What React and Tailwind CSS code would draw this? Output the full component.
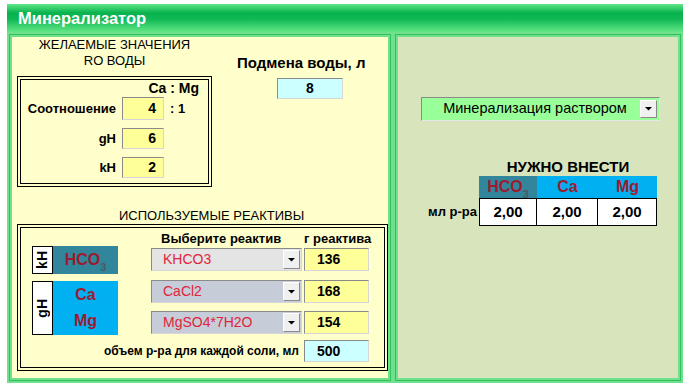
import React from "react";

const font = "font-['Liberation_Sans',Arial,sans-serif]";
const darkRed = "text-[#9c1b30]";

function Field({ value, bg = "bg-[#ffff99]", className = "", align = "justify-end pr-[7px]" }) {
  return (
    <div
      className={`flex items-center ${align} ${bg} border border-t-[#8a8a8a] border-l-[#8a8a8a] border-r-[#d6d6d6] border-b-[#d6d6d6] text-[14px] font-bold text-black ${className}`}
    >
      {value}
    </div>
  );
}

function Arrow() {
  return (
    <div className="flex h-full w-[17px] items-center justify-center border border-t-white border-l-white border-r-[#8a8a8a] border-b-[#8a8a8a] bg-[#f0f0f0]">
      <svg width="7" height="4" viewBox="0 0 7 4">
        <polygon points="0,0 7,0 3.5,3.5" fill="#000" />
      </svg>
    </div>
  );
}

function Select({ label, bg }) {
  return (
    <div
      className={`flex h-[23px] w-[151px] items-center border border-t-[#8a8a8a] border-l-[#8a8a8a] border-r-[#d6d6d6] border-b-[#d6d6d6] ${bg} pr-[1px] py-[1px]`}
    >
      <span className="flex-1 pl-[11px] text-[14px] text-[#e0243c]">{label}</span>
      <Arrow />
    </div>
  );
}

function Hco3({ className = "" }) {
  return (
    <span className={`font-bold text-[16px] ${darkRed} ${className}`}>
      HCO<sub className="text-[11px] text-[#4a5a60] align-[-3px]">3</sub>
    </span>
  );
}

const panelBorder =
  "border-2 border-[#6fe08c] shadow-[inset_0_0_0_1px_#34bf5c,inset_0_0_0_3px_#6fe08c] p-[3px]";

export default function App() {
  return (
    <div className={`h-[390px] w-[690px] bg-white pt-[4px] pl-[7px] ${font}`}>
      <div className="w-[676px]">
        <div className="flex h-[28px] items-center bg-[linear-gradient(180deg,#62e687_0%,#07b24d_32%,#12b955_55%,#62e686_100%)] pl-[11px]">
          <span className="text-[16.5px] font-bold text-white">Минерализатор</span>
        </div>

        <div className="flex h-[351px]">
          {/* left panel */}
          <div className={`w-[386px] bg-[#ffffcc] ${panelBorder}`}>
            <div className="flex">
              <div className="ml-[5px] w-[195px]">
                <div className="text-center text-[13px] leading-4 text-black">
                  ЖЕЛАЕМЫЕ ЗНАЧЕНИЯ
                  <br />
                  RO ВОДЫ
                </div>
                <div className="mt-[7px] h-[111px] border-4 border-double border-black">
                  <div className="flex h-[16px] items-center justify-end pr-[9px] text-[14px] font-bold">
                    Ca : Mg
                  </div>
                  <div className="mt-[1px] flex h-[23px] items-center">
                    <span className="w-[95px] text-right text-[13px] font-bold">Соотношение</span>
                    <Field value="4" className="ml-[6px] h-full w-[42px]" />
                    <span className="ml-[6px] text-[13px] font-bold">: 1</span>
                  </div>
                  <div className="mt-[8px] flex h-[21px] items-center">
                    <span className="w-[95px] text-right text-[13px] font-bold">gH</span>
                    <Field value="6" className="ml-[6px] h-full w-[42px]" />
                  </div>
                  <div className="mt-[8px] flex h-[21px] items-center">
                    <span className="w-[95px] text-right text-[13px] font-bold">kH</span>
                    <Field value="2" className="ml-[6px] h-full w-[42px]" />
                  </div>
                </div>
              </div>
              <div className="ml-[25px]">
                <div className="mt-[17px] text-[15px] font-bold leading-[18px]">Подмена воды, л</div>
                <Field
                  value="8"
                  bg="bg-[#ccffff]"
                  align="justify-center"
                  className="ml-[40px] mt-[6px] h-[21px] w-[66px]"
                />
              </div>
            </div>

            <div className="ml-[107px] mt-[21px] text-[13px] leading-4">ИСПОЛЬЗУЕМЫЕ РЕАКТИВЫ</div>

            <div className="ml-[5px] h-[147px] w-[371px] border-4 border-double border-black">
              <div className="mt-[4px] flex h-[14px] items-center text-[13px] font-bold leading-[14px]">
                <span className="ml-[140px] w-[143px]">Выберите реактив</span>
                <span>г реактива</span>
              </div>

              <div className="flex">
                <div className="ml-[11px] w-[86px]">
                  <div className="flex h-[28px]">
                    <div className="flex w-[21px] items-center justify-center border border-black bg-white">
                      <span className="rotate-180 text-[14px] font-bold [writing-mode:vertical-rl]">kH</span>
                    </div>
                    <div className="flex flex-1 items-center justify-center bg-[#31869b]">
                      <Hco3 />
                    </div>
                  </div>
                  <div className="mt-[7px] flex h-[54px]">
                    <div className="flex w-[21px] items-center justify-center border border-black bg-white">
                      <span className="rotate-180 text-[14px] font-bold [writing-mode:vertical-rl]">gH</span>
                    </div>
                    <div className={`flex flex-1 flex-col items-center justify-center gap-[8px] bg-[#00b0f0] text-[16px] font-bold leading-[18px] ${darkRed}`}>
                      <span>Ca</span>
                      <span>Mg</span>
                    </div>
                  </div>
                </div>

                <div className="ml-[33px] mt-[2px]">
                  {[
                    ["KHCO3", "bg-[#e4e4e4]", "136", "mt-0"],
                    ["CaCl2", "bg-[#c6cdd8]", "168", "mt-[9px]"],
                    ["MgSO4*7H2O", "bg-[#c6cdd8]", "154", "mt-[8px]"],
                  ].map(([name, bg, val, mt]) => (
                    <div key={name} className={`flex ${mt}`}>
                      <Select label={name} bg={bg} />
                      <Field
                        value={val}
                        align="justify-start pl-[12px]"
                        className="ml-[2px] h-[23px] w-[65px]"
                      />
                    </div>
                  ))}
                </div>
              </div>

              <div className="mt-[5px] flex h-[22px] items-center">
                <span className="w-[278px] text-right text-[12px] font-bold">объем р-ра для каждой соли, мл</span>
                <Field
                  value="500"
                  bg="bg-[#ccffff]"
                  align="justify-start pl-[12px]"
                  className="ml-[5px] h-full w-[65px]"
                />
              </div>
            </div>
          </div>

          {/* right panel */}
          <div className={`w-[290px] bg-[#d8e4bc] ${panelBorder}`}>
            <div className="ml-[23px] mt-[60px] flex h-[24px] w-[239px] items-center border border-t-[#8a8a8a] border-l-[#8a8a8a] border-r-[#e6e6e6] border-b-[#e6e6e6] bg-[#99ff99] py-[2px] pr-[2px]">
              <span className="flex-1 pl-[8px] text-center text-[14.5px] text-black">Минерализация раствором</span>
              <Arrow />
            </div>

            <div className="ml-[30px] mt-[37px] grid grid-cols-[51px_58px_61px_59px]">
              <div />
              <div className="col-span-3 flex h-[18px] items-center justify-center text-[15px] font-bold">
                НУЖНО ВНЕСТИ
              </div>
              <div />
              <div className="flex h-[22px] items-center justify-center bg-[#31869b]">
                <Hco3 />
              </div>
              <div className={`flex h-[22px] items-center justify-center bg-[#00b0f0] text-[16px] font-bold ${darkRed}`}>
                Ca
              </div>
              <div className={`flex h-[22px] items-center justify-center bg-[#00b0f0] text-[16px] font-bold ${darkRed}`}>
                Mg
              </div>
              <div className="flex h-[28px] items-center justify-end whitespace-nowrap pr-[2px] text-[13px] font-bold">
                мл р-ра
              </div>
              <div className="flex h-[28px] items-center justify-center border border-black bg-white text-[15px] font-bold">
                2,00
              </div>
              <div className="flex h-[28px] items-center justify-center border-y border-r border-black bg-white text-[15px] font-bold">
                2,00
              </div>
              <div className="flex h-[28px] items-center justify-center border-y border-r border-black bg-white text-[15px] font-bold">
                2,00
              </div>
            </div>
          </div>
        </div>
      </div>
    </div>
  );
}
